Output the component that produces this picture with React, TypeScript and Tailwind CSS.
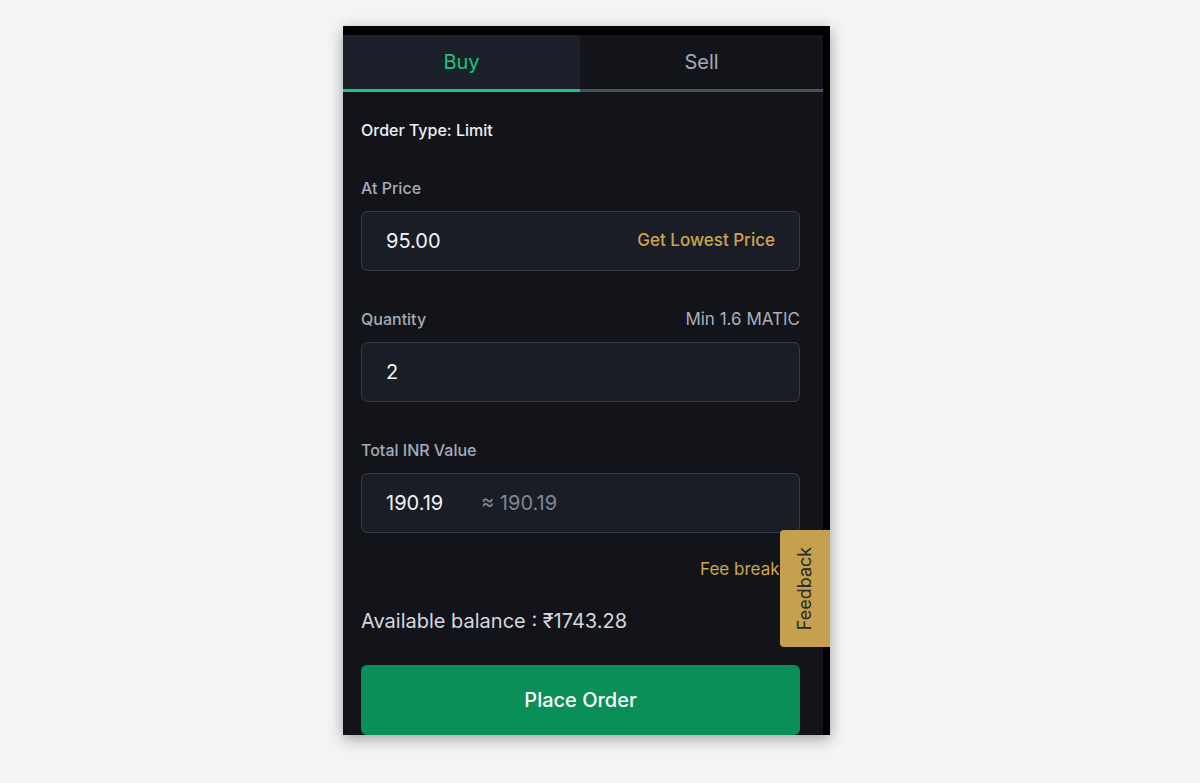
import React from "react";

export default function App() {
  const font = { fontFamily: "Inter, 'Noto Sans', sans-serif" };
  return (
    <div className="w-[1200px] h-[783px] bg-[#f3f4f6] flex pl-[343px]" style={font}>
      <div className="relative mt-[26px] w-[487px] h-[709px] bg-black pt-[9px] pr-[7px] shadow-[0_4px_14px_rgba(0,0,0,0.35)]">
        <div className="w-[480px] h-[700px] bg-[#131419] flex flex-col overflow-hidden">
          <div className="flex h-[58px]">
            <div className="w-[237px] bg-[#1b202b] flex items-center justify-center text-[20px] text-[#1fc27e] border-b-[3px] border-[#1fc27e]">
              Buy
            </div>
            <div className="flex-1 bg-[#13151a] flex items-center justify-center text-[20px] text-[#a3abb9] border-b-[3px] border-[#4a505c]">
              Sell
            </div>
          </div>
          <div className="pl-[18px] pr-[23px] flex flex-col">
            <div className="mt-[26px] h-[24px] leading-[24px] text-[16px] font-medium text-[#eef0f3]">
              Order Type: Limit
            </div>
            <div className="mt-[34px] h-[24px] leading-[24px] text-[16px] font-medium text-[#a3acbb]">At Price</div>
            <div className="mt-[11px] h-[60px] rounded-[6px] border border-[#343a47] bg-[#1a1d26] flex items-center justify-between pl-[24px] pr-[24px]">
              <span className="text-[20px] text-[#f2f3f5]">95.00</span>
              <span className="text-[17px] font-medium text-[#cba64f]">Get Lowest Price</span>
            </div>
            <div className="mt-[36px] h-[24px] leading-[24px] flex justify-between text-[16px] font-medium text-[#a3acbb]">
              <span>Quantity</span>
              <span className="font-normal text-[#a8b0bd] text-[17px]">Min 1.6 MATIC</span>
            </div>
            <div className="mt-[11px] h-[60px] rounded-[6px] border border-[#343a47] bg-[#1a1d26] flex items-center pl-[24px]">
              <span className="text-[20px] text-[#f2f3f5]">2</span>
            </div>
            <div className="mt-[36px] h-[24px] leading-[24px] text-[16px] font-medium text-[#a3acbb]">Total INR Value</div>
            <div className="mt-[11px] h-[60px] rounded-[6px] border border-[#343a47] bg-[#1a1d26] flex items-center pl-[24px]">
              <span className="text-[20px] text-[#f2f3f5] w-[95px]">190.19</span>
              <span className="text-[20px] text-[#7f8795]">≈ 190.19</span>
            </div>
            <div className="mt-[24px] h-[24px] leading-[24px] text-right text-[17px] text-[#cba64f]">Fee breakup</div>
            <div className="mt-[26px] h-[28px] leading-[28px] text-[20px] text-[#d3d8e1]">Available balance : ₹1743.28</div>
            <div className="mt-[30px] h-[70px] rounded-[6px] bg-[#0b8f58] flex items-center justify-center text-[20px] font-medium text-white">
              Place Order
            </div>
          </div>
        </div>
        <div className="absolute left-[437px] top-[504px] w-[50px] h-[117px] bg-[#c4a04f] rounded-l-[4px] flex items-center justify-center">
          <span className="-rotate-90 whitespace-nowrap text-[18px] text-[#2b2b2b]">Feedback</span>
        </div>
      </div>
    </div>
  );
}
